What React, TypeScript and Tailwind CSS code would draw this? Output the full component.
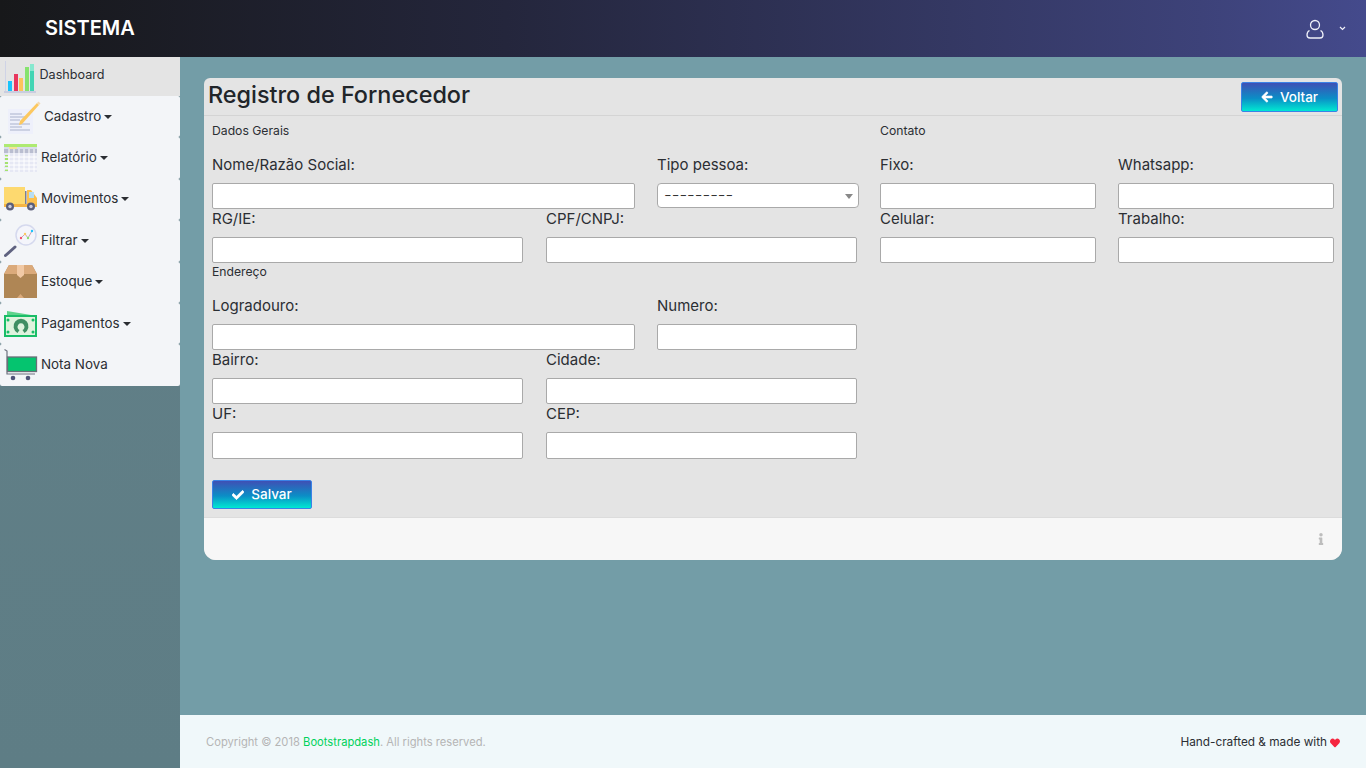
import React from "react";
import { FaArrowLeft, FaCheck, FaHeart, FaInfo } from "react-icons/fa";

const font = { fontFamily: "Inter, 'Liberation Sans', sans-serif" };

function Field({ label, w, select, tall }: { label: string; w: string; select?: boolean; tall?: boolean }) {
  return (
    <div className={`${w} shrink-0 h-[54px] flex flex-col`}>
      <label className="h-[20px] mb-[8px] shrink-0 text-[15px] leading-[20px] text-[#2b2e33]">{label}</label>
      {select ? (
        <div className="relative h-[25px] w-[202px] bg-white border border-[#a9a9a9] rounded-[4px] flex items-center px-[6px] text-[17px] leading-none font-light text-[#333]">
          ---------
          <span className="absolute right-[5px] top-[10px] w-0 h-0 border-l-[4px] border-r-[4px] border-t-[5px] border-l-transparent border-r-transparent border-t-[#888]" />
        </div>
      ) : (
        <input className={`${tall ? "h-[27px]" : "h-[26px]"} shrink-0 w-full bg-white border border-[#a9a9a9] rounded-[2px]`} />
      )}
    </div>
  );
}

const IconBars = () => (
  <svg width="34" height="34" viewBox="0 0 34 34" className="shrink-0">
    <rect x="1" y="1" width="1" height="30" fill="#cfd3e6" />
    <rect x="0" y="31" width="32" height="2" fill="#c9cde0" />
    <rect x="4" y="21" width="4" height="10" fill="#19c3fb" />
    <rect x="10" y="14" width="4" height="17" fill="#e8365d" />
    <rect x="15" y="18" width="4" height="13" fill="#fdc45c" />
    <rect x="21" y="7" width="4" height="24" fill="#86e36e" />
    <rect x="26" y="4" width="4" height="27" fill="#43d5b4" />
    <rect x="26" y="4" width="4" height="7" fill="#86e8cf" />
  </svg>
);
const IconNote = () => (
  <svg width="34" height="34" viewBox="0 0 34 34">
    <rect x="0" y="9" width="25" height="25" fill="#eef0fb" />
    <g stroke="#aab2cc" strokeWidth="1">
      <path d="M2 14h12M2 17h15M2 20h10M2 24h20M2 27h12M2 30h20" />
    </g>
    <path d="M12 21 L29 3 L31 5 L14 24 L11 25 Z" fill="#fcc860" />
    <path d="M29 3 l1.500 -1.500 l2 2 l-1.500 1.500 Z" fill="#f3d9b0" />
  </svg>
);
const IconTable = () => (
  <svg width="34" height="28" viewBox="0 0 34 28">
    <rect x="0" y="0" width="33" height="28" fill="#e6e8f4" />
    <rect x="0" y="0" width="33" height="3" fill="#aeea71" />
    <rect x="0" y="3" width="33" height="2" fill="#d9dcec" />
    <rect x="5" y="3" width="8" height="2" fill="#f7e29a" />
    <rect x="0" y="5" width="33" height="4" fill="#b9bdd0" />
    <g fill="#a5e26d">
      <rect x="1" y="11" width="3" height="2" /><rect x="1" y="14" width="3" height="2" /><rect x="1" y="18" width="3" height="2" /><rect x="1" y="21" width="3" height="2" /><rect x="1" y="25" width="3" height="2" />
    </g>
    <g stroke="#fff" strokeWidth="1"><path d="M5 5v23M10 5v23M15 5v23M20 5v23M25 5v23M30 5v23M0 13h33M0 17h33M0 21h33M0 25h33" /></g>
  </svg>
);
const IconTruck = () => (
  <svg width="34" height="26" viewBox="0 0 34 26">
    <rect x="0" y="1" width="21" height="17" fill="#fdd96f" />
    <rect x="21" y="5" width="1.500" height="14" fill="#7b7f93" />
    <path d="M23 4h4l6 8v7H23Z" fill="#fcc04f" />
    <rect x="25" y="6" width="5" height="6" fill="#b7def5" />
    <rect x="0" y="18" width="33" height="3" fill="#f6b545" />
    <circle cx="6" cy="20.500" r="4" fill="#5b5f7a" /><circle cx="6" cy="20.500" r="1.700" fill="#c9cce0" />
    <circle cx="27" cy="20.500" r="4" fill="#5b5f7a" /><circle cx="27" cy="20.500" r="1.700" fill="#c9cce0" />
  </svg>
);
const IconSearch = () => (
  <svg width="34" height="34" viewBox="0 0 34 34">
    <path d="M1.500 31.500 L11 23" stroke="#5f6280" strokeWidth="3" strokeLinecap="round" />
    <circle cx="22" cy="11" r="10" fill="#f4f5fb" stroke="#d5d9ee" strokeWidth="1.500" />
    <path d="M17 14 L21 10 L24 14 L28 7" fill="none" stroke="#c9a6b5" strokeWidth="1" />
    <circle cx="17" cy="14" r="1.200" fill="#f0506e" /><circle cx="21" cy="10" r="1.200" fill="#fcc860" /><circle cx="24" cy="14" r="1.200" fill="#8be070" /><circle cx="28" cy="7" r="1.200" fill="#19c3fb" />
  </svg>
);
const IconBox = () => (
  <svg width="34" height="34" viewBox="0 0 34 34">
    <path d="M0 9 L5 0 H28 L33 9 V33 H0 Z" fill="#af8655" />
    <path d="M0 9 L5 0 H28 L33 9 Z" fill="#dbaa7b" />
    <path d="M13 0 h7 v10 l-3.500 3 l-3.500 -3 Z" fill="#f1c9a5" />
    <path d="M13 33 l3.500 -4 l3.500 4 Z" fill="#dbaa7b" />
  </svg>
);
const IconMoney = () => (
  <svg width="34" height="26" viewBox="0 0 34 26">
    <path d="M3 0 L33 5 V8 H3 Z" fill="#5fd38c" />
    <rect x="0" y="4" width="33" height="22" fill="#19bd68" />
    <rect x="2" y="6" width="29" height="18" fill="#dff3de" />
    <path d="M13.500 22 A7.500 7.500 0 1 1 20.500 22 L18.500 19 A3.500 3.500 0 1 0 15.500 19 Z" fill="#3f8f63" />
    <g fill="#19bd68"><circle cx="4" cy="9" r="1.500" /><circle cx="29" cy="9" r="1.500" /><circle cx="4" cy="21" r="1.500" /><circle cx="29" cy="21" r="1.500" /></g>
  </svg>
);
const IconCart = () => (
  <svg width="34" height="32" viewBox="0 0 34 32">
    <path d="M0.500 0.500 L3 2 V25 H31" fill="none" stroke="#6f7380" strokeWidth="1.200" />
    <rect x="3.500" y="8" width="29" height="14.500" fill="#05c46f" stroke="#6a6e78" strokeWidth="1.300" />
    <circle cx="9" cy="29" r="2.300" fill="#4f5378" /><circle cx="24" cy="29" r="2.300" fill="#4f5378" />
  </svg>
);

function Caret() {
  return <span className="inline-block ml-[3px] align-[2px] w-0 h-0 border-l-[4px] border-r-[4px] border-t-[4px] border-l-transparent border-r-transparent border-t-[#2b2e33]" />;
}

function Item({ icon, label, caret, pl = "pl-[4px]", gap = "w-[37px]" }: { icon: React.ReactNode; label: string; caret?: boolean; pl?: string; gap?: string }) {
  return (
    <div className={`h-[41.4px] bg-[#f3f5f8] rounded-[2px] flex items-center ${pl} text-[13.400px] text-[#2b2e33]`}>
      <span className={`${gap} shrink-0 flex items-center`}>{icon}</span>
      <span className="pb-[2px]">{label}{caret && <Caret />}</span>
    </div>
  );
}

function GradButton({ icon, label, cls }: { icon: React.ReactNode; label: string; cls: string }) {
  return (
    <button className={`${cls} flex items-center justify-center gap-[7px] rounded-[2px] border border-[#3b82e6] bg-[linear-gradient(180deg,#3f50b5,#0b8ec6_55%,#00e8d2)] text-white text-[13.500px] font-medium`}>
      {icon}
      <span>{label}</span>
    </button>
  );
}

export default function App() {
  return (
    <div style={font} className="w-[1366px] h-[768px] overflow-hidden flex flex-col bg-[#739da7]">
      <header className="h-[57px] shrink-0 flex items-center justify-between bg-[linear-gradient(90deg,#17181a,#24263c_37%,#3d4279_88%,#444a8c)] pl-[45px] pr-[20px]">
        <span className="text-white text-[20px] font-semibold leading-none pb-[2px]">SISTEMA</span>
        <div className="flex items-center gap-[15px]">
          <svg width="18" height="20" viewBox="0 0 18 20" fill="none" stroke="#eef0f8" strokeWidth="1.300">
            <circle cx="9" cy="6" r="4.500" />
            <path d="M3.500 11.500 C1.500 12.500 1 14 1 16 C1 18.500 2.500 19 4 19 H14 C15.500 19 17 18.500 17 16 C17 14 16.500 12.500 14.500 11.500" />
          </svg>
          <svg width="7" height="5" viewBox="0 0 7 5" fill="none" stroke="#f0f0f8" strokeWidth="1.200"><path d="M1 1l2.500 2.500L6 1" /></svg>
        </div>
      </header>
      <div className="flex-1 flex min-h-0">
        <aside className="w-[180px] shrink-0 bg-gradient-to-b from-[#628088] to-[#5e7d85]">
          <div className="h-[39px] bg-[#e4e4e4] flex items-center pl-[4px] text-[12.600px] text-[#2b2e33]">
            <span className="w-[35.500px] shrink-0"><IconBars /></span>
            <span className="pb-[2px]">Dashboard</span>
          </div>
          <Item icon={<IconNote />} label="Cadastro" caret pl="pl-[8px]" gap="w-[36px]" />
          <Item icon={<IconTable />} label="Relatório" caret />
          <Item icon={<IconTruck />} label="Movimentos" caret />
          <Item icon={<IconSearch />} label="Filtrar" caret />
          <Item icon={<IconBox />} label="Estoque" caret />
          <Item icon={<IconMoney />} label="Pagamentos" caret />
          <Item icon={<IconCart />} label="Nota Nova" />
        </aside>
        <div className="flex-1 flex flex-col min-w-0">
          <main className="flex-1 pt-[21px] pl-[24px] pr-[24px]">
            <section className="w-[1138px] h-[482px] rounded-[6px] rounded-b-[12px] overflow-hidden bg-[#e4e4e4] flex flex-col">
              <div className="h-[38px] shrink-0 border-b border-[#d4d4d4] flex items-start justify-between pl-[4px] pr-[4px] pt-[4px]">
                <h1 className="text-[23.400px] font-medium text-[#212529] leading-[26px]">Registro de Fornecedor</h1>
                <GradButton cls="w-[97px] h-[30px]" icon={<FaArrowLeft className="text-[12px] stroke-[30]" />} label="Voltar" />
              </div>
              <div className="flex-1 flex pl-[8px] pt-[9px]">
                <div className="w-[645px] shrink-0">
                  <p className="h-[10px] text-[12.200px] leading-[12px] text-[#2b2e33]">Dados Gerais</p>
                  <div className="pt-[20px]">
                    <div className="flex gap-[22px]">
                      <Field label="Nome/Razão Social:" w="w-[423px]" />
                      <Field label="Tipo pessoa:" w="w-[200px]" select />
                    </div>
                    <div className="flex gap-[23px]">
                      <Field label="RG/IE:" w="w-[311px]" />
                      <Field label="CPF/CNPJ:" w="w-[311px]" />
                    </div>
                  </div>
                  <p className="h-[10px] mt-[3px] text-[12.200px] leading-[12px] text-[#2b2e33]">Endereço</p>
                  <div className="pt-[20px]">
                    <div className="flex gap-[22px]">
                      <Field label="Logradouro:" w="w-[423px]" />
                      <Field label="Numero:" w="w-[200px]" />
                    </div>
                    <div className="flex gap-[23px]">
                      <Field label="Bairro:" w="w-[311px]" />
                      <Field label="Cidade:" w="w-[311px]" />
                    </div>
                    <div className="flex gap-[23px]">
                      <Field label="UF:" w="w-[311px]" tall />
                      <Field label="CEP:" w="w-[311px]" tall />
                    </div>
                  </div>
                  <GradButton cls="w-[100px] h-[29px] mt-[22px]" icon={<FaCheck className="text-[12px] stroke-[30]" />} label="Salvar" />
                </div>
                <div className="ml-[23px] w-[454px]">
                  <p className="h-[10px] text-[12.200px] leading-[12px] text-[#2b2e33]">Contato</p>
                  <div className="pt-[20px]">
                    <div className="flex gap-[22px]">
                      <Field label="Fixo:" w="w-[216px]" />
                      <Field label="Whatsapp:" w="w-[216px]" />
                    </div>
                    <div className="flex gap-[22px]">
                      <Field label="Celular:" w="w-[216px]" />
                      <Field label="Trabalho:" w="w-[216px]" />
                    </div>
                  </div>
                </div>
              </div>
              <div className="h-[43px] shrink-0 bg-[#f7f7f7] border-t border-[#dcdcdc] flex items-center justify-end pr-[15px]">
                <FaInfo className="text-[12px] text-[#bdbdbd]" />
              </div>
            </section>
          </main>
          <footer className="h-[53px] shrink-0 bg-[#f0f8fa] flex items-center justify-between pl-[26px] pr-[26px] pt-[1px] text-[11.200px]">
            <span className="text-[#b5b5b5]">Copyright © 2018 <span className="text-[#00d25b]">Bootstrapdash</span>. All rights reserved.</span>
            <span className="flex items-center gap-[3px] pt-[1px] text-[11.800px] text-[#2b2e33]">Hand-crafted &amp; made with <FaHeart className="text-[10px] text-[#f5263f]" /></span>
          </footer>
        </div>
      </div>
    </div>
  );
}
